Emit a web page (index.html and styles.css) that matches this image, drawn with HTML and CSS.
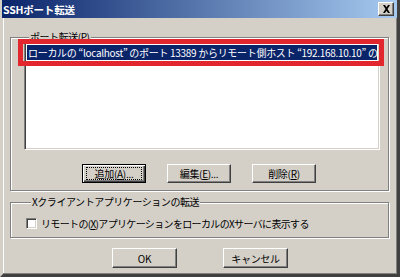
FILE: index.html
```html
<!DOCTYPE html>
<html lang="ja">
<head>
<meta charset="utf-8">
<title>SSHポート転送</title>
<link rel="stylesheet" href="styles.css">
</head>
<body>
<div class="window">
  <div class="titlebar">
    <span class="title">SSHポート転送</span>
    <span class="close">
      <svg width="9" height="8" viewBox="0 0 9 8"><path d="M1 0h2l1.5 2.2L6 0h2L5.5 4 8 8H6L4.5 5.8 3 8H1l2.5-4z" fill="#000"/></svg>
    </span>
  </div>
  <div class="content">
    <fieldset class="group group-ports">
      <legend>ポート転送(<u>P</u>)</legend>
      <div class="listwrap">
        <div class="list">
          <div class="row selected">ローカルの “localhost” のポート 13389 からリモート側ホスト “192.168.10.10” の</div>
        </div>
        <div class="highlight"></div>
      </div>
      <div class="buttons">
        <button class="btn btn-default"><span class="focus">追加(<u>A</u>)...</span></button>
        <button class="btn">編集(<u>E</u>)...</button>
        <button class="btn">削除(<u>R</u>)</button>
      </div>
    </fieldset>
    <fieldset class="group group-x">
      <legend>Xクライアントアプリケーションの転送</legend>
      <label class="check"><span class="box"></span><span>リモートの(<u>X</u>)アプリケーションをローカルのXサーバに表示する</span></label>
    </fieldset>
    <div class="dialog-buttons">
      <button class="btn btn-wide">OK</button>
      <button class="btn btn-wide">キャンセル</button>
    </div>
  </div>
</div>
</body>
</html>
```

FILE: styles.css
```css
html, body {
  margin: 0;
  padding: 0;
}
body {
  width: 400px;
  height: 277px;
  overflow: hidden;
  background: #d4d0c8;
  font-family: "Noto Sans CJK JP", "Liberation Sans", sans-serif;
  font-size: 10px;
  color: #000;
}
u { text-decoration: underline; }
.window {
  box-sizing: border-box;
  width: 400px;
  height: 277px;
  background: #d4d0c8;
  border-left: 3px solid #d4d0c8;
  border-right: 3px solid #404040;
  border-bottom: 3px solid #404040;
  box-shadow: inset -1px -1px 0 #808080, inset 1px 0 0 #fff;
  display: flex;
  flex-direction: column;
}
.titlebar {
  height: 18px;
  background: linear-gradient(to right, #0a246a, #a6caf0);
  display: flex;
  align-items: center;
  padding: 0 3px 0 1px;
  margin-left: -1px;
}
.title {
  color: #fff;
  font-weight: bold;
  font-size: 10.5px;
  letter-spacing: -0.2px;
  flex: 1;
}
.close {
  width: 14px;
  height: 12px;
  background: #d4d0c8;
  border-top: 1px solid #fff;
  border-left: 1px solid #fff;
  border-right: 1px solid #404040;
  border-bottom: 1px solid #404040;
  box-shadow: inset -1px -1px 0 #808080;
  display: flex;
  align-items: center;
  justify-content: center;
}
.content {
  flex: 1;
  padding: 13px 8px 0 7px;
  display: flex;
  flex-direction: column;
}
.group {
  margin: 0;
  border: 1px solid #808080;
  box-shadow: inset 1px 1px 0 #fff, 1px 1px 0 #fff;
  min-width: 0;
}
.group legend {
  padding: 0 1px;
  margin-left: 5px;
  line-height: 12px;
  height: 12px;
  background: #d4d0c8;
  letter-spacing: -0.45px;
}
.group-ports {
  padding: 0 8px 7px 13px;
}
.listwrap {
  position: relative;
  margin-top: -1px;
}
.list {
  height: 108px;
  box-sizing: border-box;
  background: #fff;
  border-top: 1px solid #808080;
  border-left: 1px solid #808080;
  border-right: 1px solid #fff;
  border-bottom: 1px solid #fff;
  box-shadow: inset 1px 1px 0 #404040, inset -1px -1px 0 #d4d0c8;
  padding: 2px 2px;
}
.row {
  height: 15px;
  line-height: 15px;
  white-space: nowrap;
  overflow: hidden;
  letter-spacing: -0.3px;
  padding-left: 1px;
}
.row.selected {
  background: #0a246a;
  color: #fff;
}
.highlight {
  position: absolute;
  left: -6px;
  top: -3px;
  width: 366px;
  height: 27px;
  box-sizing: border-box;
  border: 5px solid #e2262d;
}
.buttons {
  display: flex;
  gap: 21px;
  margin-top: 14px;
  padding-left: 58px;
}
.btn {
  box-sizing: border-box;
  width: 64px;
  height: 19px;
  padding: 0;
  margin: 0;
  font: inherit;
  color: #000;
  background: #d4d0c8;
  border-top: 1px solid #fff;
  border-left: 1px solid #fff;
  border-right: 1px solid #404040;
  border-bottom: 1px solid #404040;
  box-shadow: inset -1px -1px 0 #808080;
  display: flex;
  align-items: center;
  justify-content: center;
  letter-spacing: -0.3px;
}
.btn-default {
  border: 1px solid #000;
  box-shadow: inset 1px 1px 0 #fff, inset -1px -1px 0 #404040, inset -2px -2px 0 #808080;
}
.focus {
  border: 1px dotted #000;
  padding: 0 8px;
  line-height: 11px;
}
.group-x {
  margin-top: 5px;
  padding: 0 8px 6px 15px;
}
.check {
  display: flex;
  align-items: center;
  gap: 4px;
  margin-top: 8px;
  letter-spacing: -0.65px;
}
.box {
  width: 11px;
  height: 11px;
  box-sizing: border-box;
  background: #fff;
  border-top: 1px solid #808080;
  border-left: 1px solid #808080;
  border-right: 1px solid #fff;
  border-bottom: 1px solid #fff;
  box-shadow: inset 1px 1px 0 #404040, inset -1px -1px 0 #d4d0c8;
}
.dialog-buttons {
  display: flex;
  justify-content: center;
  gap: 46px;
  margin-top: 10px;
  padding-left: 1px;
}
.btn-wide {
  width: 65px;
  height: 20px;
}
```
